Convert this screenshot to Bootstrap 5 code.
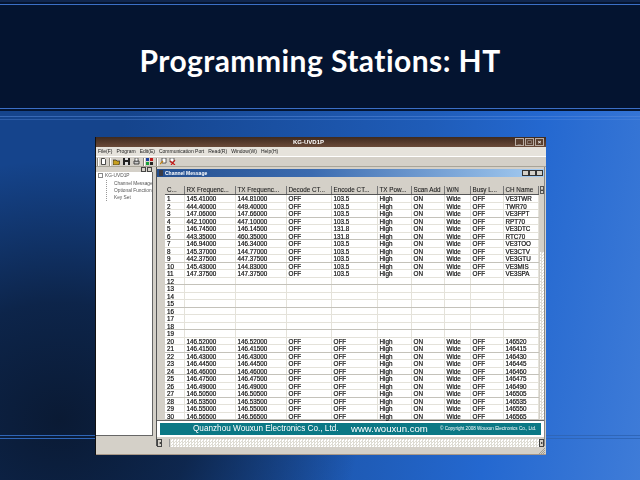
<!DOCTYPE html>
<html lang="en">
<head>
<meta charset="UTF-8">
<title>Programming Stations: HT</title>
<link href="https://cdn.jsdelivr.net/npm/bootstrap@5.3.0/dist/css/bootstrap.min.css" rel="stylesheet">
<style>
html, body { width: 640px; height: 480px; overflow: hidden; }
body {
    font-family: "Liberation Sans", sans-serif;
    background:
        linear-gradient(#2f66b8, #2f66b8) 0 435px / 100% 1px no-repeat,
        linear-gradient(#2f66b8, #2f66b8) 0 438px / 100% 1px no-repeat,
        linear-gradient(rgba(90,140,220,.5), rgba(90,140,220,.5)) 0 116px / 100% 1px no-repeat,
        linear-gradient(rgba(90,140,220,.35), rgba(90,140,220,.35)) 0 119px / 100% 1px no-repeat,
        radial-gradient(ellipse 300px 260px at 60px 420px, #0a1a34 0%, rgba(10,26,52,.75) 45%, rgba(10,26,52,0) 100%),
        linear-gradient(100deg, #15448c 0%, #15448c 20%, #1f5cb8 62%, #2468d0 78%, #3f7cd8 100%);
}
.title-band {
    height: 111px;
    background: #041430;
    border-top: 2px solid #10264e;
    position: relative;
}
.title-band::before, .title-band::after { content: ""; display: block; height: 1px; background: #3b6fc6; }
.title-band::before { margin-top: 2px; }
.title-band::after { margin-top: 103px; }
.title-band h1 {
    font-family: Lato, sans-serif;
    font-weight: 700;
    font-size: 30px;
    letter-spacing: .45px;
    line-height: 36px;
    color: #fff;
    margin: 0;
    position: absolute;
    top: 40px;
    left: 0;
    right: 0;
    text-align: center;
}
.kg-window {
    width: 451px;
    height: 318px;
    margin: 26px 0 0 95px;
    background: #d4d0c8;
    border-left: 1px solid #111;
    font-size: 6.3px;
    line-height: 7px;
    color: #111;
    filter: blur(.3px);
    overflow: hidden;
}
.kg-title { height: 10px; background: linear-gradient(#3f2a1e, #6a4a38); color: #fff; font-weight: 700; font-size: 6px; line-height: 10px; position: relative; }
.kg-title span { margin-left: 197px; }
.win-btns { position: absolute; right: 2px; top: 1px; }
.win-btns i { display: block; width: 9px; height: 8px; border: 1px solid #b8aca2; background: #5a4030; margin-left: 1px; color: #fff; font: 700 6px/6px "Liberation Sans", sans-serif; text-align: center; }
.kg-menu { height: 10px; padding-left: 2px; gap: 4px; background: #e6e3dc; border-bottom: 1px solid #fff; color: #222; font-size: 5px; line-height: 8px; }
.kg-tools { height: 10px; padding-left: 1px; gap: 3px; border-bottom: 1px solid #a8a498; }
.kg-tools .sep { width: 1px; height: 8px; background: #8a867c; box-shadow: 1px 0 0 #fff; }
.kg-tools svg { width: 7px; height: 7px; display: block; flex: none; }
.kg-tools svg.doc { width: 5px; }
.kg-tools .tight { margin-left: -1px; }
.kg-body { height: 279px; }
.tree-pane { width: 57px; height: 270px; }
.tree-head { height: 5px; gap: 1px; padding-right: 1px; }
.tree-head i { display: block; width: 5px; height: 5px; border: 1px solid #444; background: #d4d0c8; }
.tree { height: 264px; background: #fff; border-right: 1px solid #666; border-bottom: 1px solid #666; color: #555; font-size: 4.8px; padding: 0 0 0 2px; }
.tree .node { height: 7px; white-space: nowrap; }
.tree .root { padding-left: 7px; position: relative; }
.tree .root::before { content: ""; position: absolute; left: 0; top: 1px; width: 5px; height: 5px; border: 1px solid #888; }
.tree ul { margin: 1px 0 0 8px; padding: 0 0 0 7px; list-style: none; border-left: 1px dotted #999; height: 21px; }
.mdi { width: 389px; margin-left: 3px; height: 279px; border-left: 1px solid #555; border-right: 1px solid #888; }
.mdi-caption { height: 8px; margin-top: 2px; background: linear-gradient(90deg, #244f8f 0%, #3b6bb0 40%, #a6cdf2 100%); color: #fff; font-weight: 700; font-size: 5px; line-height: 8px; padding-left: 2px; gap: 2px; }
.mdi-caption .phone { width: 4px; height: 6px; background: #3c3c44; }
.mdi-caption .btns { padding-right: 1px; }
.mdi-caption .btns i { display: block; width: 7px; height: 6px; background: #d4d0c8; border: 1px solid #333; }
.grid-wrap { padding: 9px 1px 0 8px; }
.kg-grid { table-layout: fixed; border-collapse: collapse; width: 373px; background: #fff; margin: 0; }
.kg-grid th, .kg-grid td { padding: 0 0 0 2px; white-space: nowrap; }
.kg-grid th { height: 8px; background: #d4d0c8; font-weight: 400; color: #222; font-size: 6.3px; line-height: 6px; overflow: hidden; border-right: 1px solid #777; border-bottom: 1px solid #555; -webkit-text-stroke: .1px #222; }
.kg-grid td { padding-top: 1px; line-height: 5px; border-right: 1px solid #e4e2da; border-bottom: 1px solid #e4e2da; -webkit-text-stroke: .2px #111; }
.kg-grid tbody tr:nth-child(odd) td { height: 8px; }
.kg-grid tbody tr:nth-child(even) td { height: 7px; }
.kg-grid tbody tr:nth-child(3n) td { border-bottom-color: #c4c2ba; }
.v-scroll { width: 5px; margin-left: 1px; }
.v-scroll .up { height: 8px; border: 1px solid #555; background: #d4d0c8; font-size: 4px; line-height: 5px; text-align: center; }
.v-scroll .thumb { height: 58px; background: #d4d0c8; }
.checker, .v-scroll .track {
    background: repeating-conic-gradient(#dedcd4 0 25%, #fff 0 50%) 0 0 / 3px 3px;
}
.v-scroll .track { height: 167px; }
.kg-footer { height: 17px; background: #fff; padding: 2px 3px 3px 3px; border-top: 1px solid #666; }
.kg-band { height: 12px; background: #0b7885; color: #fff; white-space: nowrap; }
.kg-band .co { margin-left: 33px; font-size: 8.2px; line-height: 12px; width: 158px; }
.kg-band .web { font-size: 9.6px; line-height: 11px; width: 89px; }
.kg-band .copy { font-size: 4.6px; line-height: 12px; }
.kg-hscroll { height: 8px; margin-top: 2px; }
.kg-hscroll .btn-arrow { width: 5px; height: 8px; background: #d4d0c8; border: 1px solid #444; font-size: 4px; line-height: 5px; text-align: center; }
.kg-hscroll .thumb { width: 8px; height: 8px; background: #d4d0c8; border-right: 1px solid #999; }
.kg-status { height: 9px; border-bottom: 1px solid #a89888; }
.kg-status svg { width: 6px; height: 6px; margin-right: 1px; }
</style>
</head>
<body>
<header class="title-band">
    <h1>Programming Stations: HT</h1>
</header>

<main class="kg-window">
    <div class="kg-title">
        <span>KG-UVD1P</span>
        <div class="win-btns d-flex">
            <i>_</i><i>&#9633;</i><i>&times;</i>
        </div>
    </div>
    <nav class="kg-menu d-flex">
        <span>File(F)</span><span>Program</span><span>Edit(E)</span><span>Communication Port</span><span>Read(R)</span><span>Window(W)</span><span>Help(H)</span>
    </nav>
    <div class="kg-tools d-flex align-items-center">
        <span class="sep"></span>
        <svg class="doc" viewBox="0 0 5 7"><path d="M.5.5h3l1 1v5h-4z" fill="#fff" stroke="#222" stroke-width=".8"/></svg>
        <span class="sep"></span>
        <svg viewBox="0 0 7 7"><path d="M0 2h3l1 1h3L6 7H0z" fill="#c8a020" stroke="#222" stroke-width=".7"/></svg>
        <svg viewBox="0 0 7 7"><path d="M0 0h7v7H0z" fill="#222"/><path d="M2 0h3v2H2zM2 4h3v3H2z" fill="#ddd"/></svg>
        <svg viewBox="0 0 7 7"><path d="M1 3h5v3H1z" fill="#ccc" stroke="#222" stroke-width=".8"/><path d="M2 0h3v3H2z" fill="#fff" stroke="#222" stroke-width=".6"/></svg>
        <span class="sep"></span>
        <svg class="tight" viewBox="0 0 7 7"><path d="M0 0h3v3H0z" fill="#1a3fa0"/><path d="M4 0h3v3H4z" fill="#c01818"/><path d="M0 4h3v3H0z" fill="#18a038"/><path d="M4 4h3v3H4z" fill="#222"/></svg>
        <span class="sep"></span>
        <svg viewBox="0 0 7 7"><path d="M2 0h4v5H2z" fill="#fff" stroke="#222" stroke-width=".7"/><path d="M0 6l3-3" stroke="#c08010" stroke-width="1.2"/></svg>
        <svg class="tight" viewBox="0 0 7 7"><path d="M1 0h4v4H1z" fill="#fff" stroke="#222" stroke-width=".6"/><path d="M1 3l5 4M6 2L2 7" stroke="#c81818" stroke-width="1.2"/></svg>
    </div>
    <div class="kg-body d-flex">
        <aside class="tree-pane">
            <div class="tree-head d-flex justify-content-end"><i></i><i></i></div>
            <div class="tree">
                <div class="node root">KG-UVD1P</div>
                <ul>
                    <li class="node">Channel Message</li>
                    <li class="node">Optional Function</li>
                    <li class="node">Key Set</li>
                </ul>
            </div>
        </aside>
        <section class="mdi">
            <div class="mdi-caption d-flex align-items-center">
                <span class="phone"></span>
                <span class="flex-grow-1">Channel Message</span>
                <div class="btns d-flex"><i></i><i></i><i></i></div>
            </div>
            <div class="grid-wrap d-flex">
                <table class="kg-grid">
                    <colgroup>
                        <col style="width:19px"><col style="width:51px"><col style="width:51px"><col style="width:45px"><col style="width:46px"><col style="width:34px"><col style="width:33px"><col style="width:26px"><col style="width:33px"><col style="width:35px">
                    </colgroup>
                    <thead>
                        <tr><th>C...</th><th>RX Frequenc...</th><th>TX Frequenc...</th><th>Decode CT...</th><th>Encode CT...</th><th>TX Pow...</th><th>Scan Add</th><th>W/N</th><th>Busy L...</th><th>CH Name</th></tr>
                    </thead>
                    <tbody id="rows"></tbody>
                </table>
                <div class="v-scroll">
                    <div class="up">&#9652;</div>
                    <div class="thumb"></div>
                    <div class="track"></div>
                </div>
            </div>
            <div class="kg-footer">
                <div class="kg-band d-flex">
                    <span class="co">Quanzhou Wouxun Electronics Co., Ltd.</span>
                    <span class="web">www.wouxun.com</span>
                    <span class="copy">&copy; Copyright 2008 Wouxun Electronics Co., Ltd.</span>
                </div>
            </div>
            <div class="kg-hscroll checker d-flex">
                <div class="btn-arrow">&#9666;</div>
                <div class="thumb"></div>
                <div class="flex-grow-1"></div>
                <div class="btn-arrow">&#9656;</div>
            </div>
        </section>
    </div>
    <div class="kg-status d-flex justify-content-end align-items-end">
        <svg viewBox="0 0 6 6"><path d="M0 6l6-6M2 6l4-4M4 6l2-2" stroke="#8a867c" stroke-width=".7"/></svg>
    </div>
</main>

<script>
    // channel table: [rx, tx, encode, name]
    const channels = {
        1: ['145.41000','144.81000','103.5','VE3TWR'], 2: ['444.40000','449.40000','103.5','TWR70'],
        3: ['147.06000','147.66000','103.5','VE3FPT'], 4: ['442.10000','447.10000','103.5','RPT70'],
        5: ['146.74500','146.14500','131.8','VE3DTC'], 6: ['443.35000','460.35000','131.8','RTC70'],
        7: ['146.94000','146.34000','103.5','VE3TOO'], 8: ['145.37000','144.77000','103.5','VE3CTV'],
        9: ['442.37500','447.37500','103.5','VE3GTU'], 10: ['145.43000','144.83000','103.5','VE3MIS'],
        11: ['147.37500','147.37500','103.5','VE3SPA'],
        20: ['146.52000','146.52000','OFF','146520'], 21: ['146.41500','146.41500','OFF','146415'],
        22: ['146.43000','146.43000','OFF','146430'], 23: ['146.44500','146.44500','OFF','146445'],
        24: ['146.46000','146.46000','OFF','146460'], 25: ['146.47500','146.47500','OFF','146475'],
        26: ['146.49000','146.49000','OFF','146490'], 27: ['146.50500','146.50500','OFF','146505'],
        28: ['146.53500','146.53500','OFF','146535'], 29: ['146.55000','146.55000','OFF','146550'],
        30: ['146.56500','146.56500','OFF','146565']
    };
    let html = '';
    for (let n = 1; n <= 30; n++) {
        const c = channels[n];
        const cells = c ? [c[0], c[1], 'OFF', c[2], 'High', 'ON', 'Wide', 'OFF', c[3]] : Array(9).fill('');
        html += '<tr><td>' + n + '</td>' + cells.map(t => '<td>' + t + '</td>').join('') + '</tr>';
    }
    document.getElementById('rows').innerHTML = html;
</script>
<script src="https://cdn.jsdelivr.net/npm/bootstrap@5.3.0/dist/js/bootstrap.bundle.min.js"></script>
</body>
</html>
